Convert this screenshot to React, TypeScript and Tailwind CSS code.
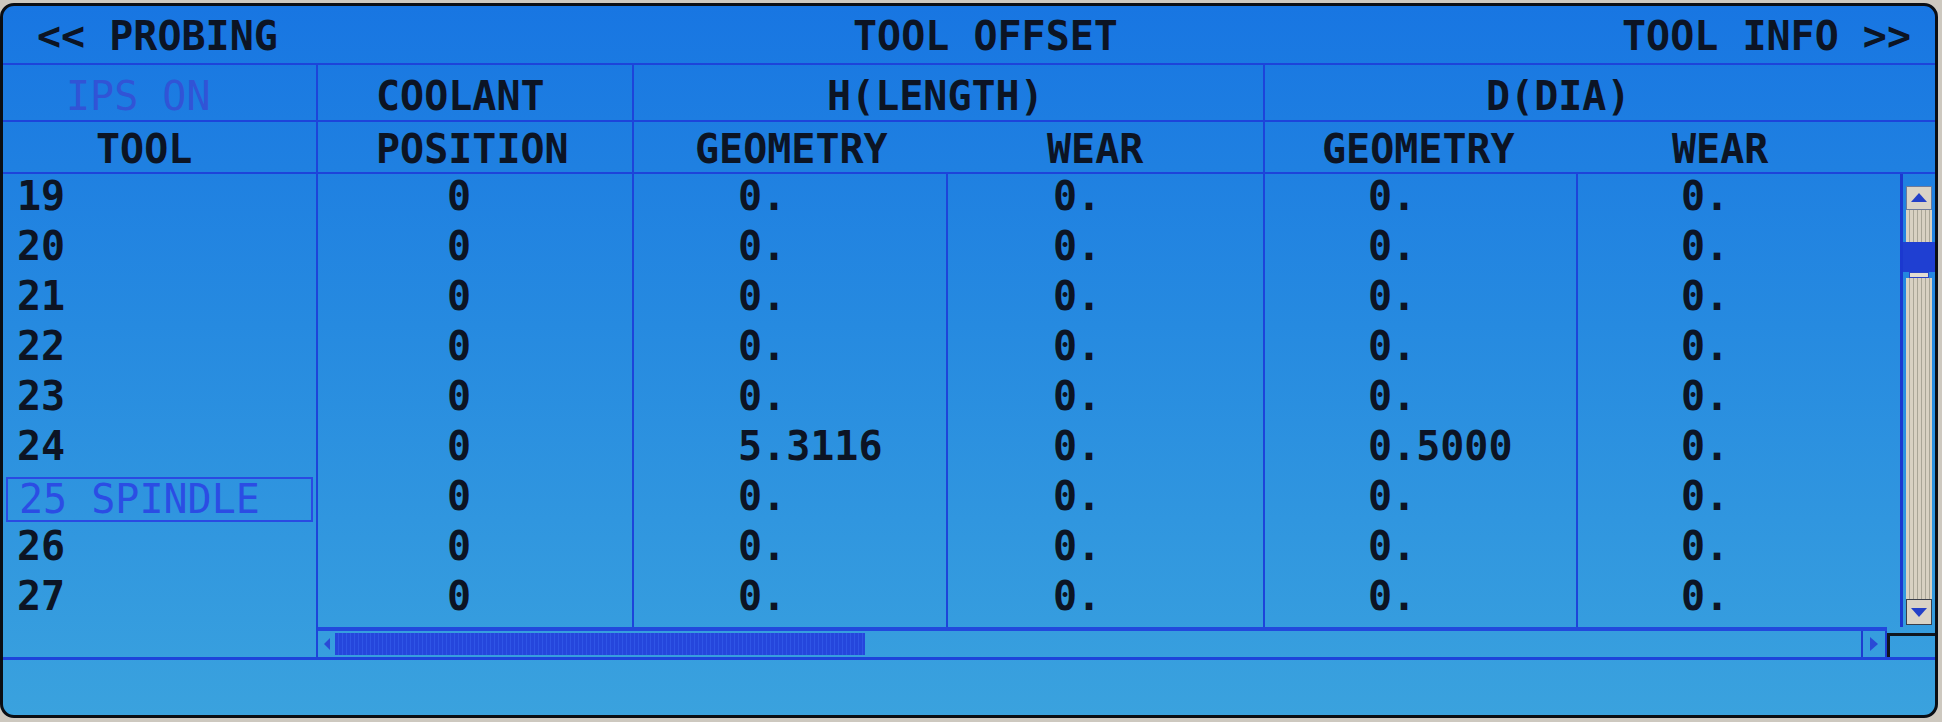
const mono = "font-['DejaVu_Sans_Mono','Liberation_Mono',monospace]"

type Row = { tool: string; note?: string; coolant: string; hg: string; hw: string; dg: string; dw: string }

const rows: Row[] = [
  { tool: '19', coolant: '0', hg: '0.', hw: '0.', dg: '0.', dw: '0.' },
  { tool: '20', coolant: '0', hg: '0.', hw: '0.', dg: '0.', dw: '0.' },
  { tool: '21', coolant: '0', hg: '0.', hw: '0.', dg: '0.', dw: '0.' },
  { tool: '22', coolant: '0', hg: '0.', hw: '0.', dg: '0.', dw: '0.' },
  { tool: '23', coolant: '0', hg: '0.', hw: '0.', dg: '0.', dw: '0.' },
  { tool: '24', coolant: '0', hg: '5.3116', hw: '0.', dg: '0.5000', dw: '0.' },
  { tool: '25', note: 'SPINDLE', coolant: '0', hg: '0.', hw: '0.', dg: '0.', dw: '0.' },
  { tool: '26', coolant: '0', hg: '0.', hw: '0.', dg: '0.', dw: '0.' },
  { tool: '27', coolant: '0', hg: '0.', hw: '0.', dg: '0.', dw: '0.' },
]

function Cell({ pad, children, last }: { pad: string; children?: React.ReactNode; last?: boolean }) {
  return (
    <div className={`flex items-center h-full ${pad} ${last ? '' : 'border-r-2 border-[#1d44da]'}`}>
      {children}
    </div>
  )
}

const track =
  'bg-[repeating-linear-gradient(90deg,#d8d1c2_0px,#d8d1c2_3px,#a9a596_3px,#a9a596_4px)]'

function VScroll() {
  return (
    <div className="w-[35px] flex flex-col pt-[12px] pb-[2px] border-l-[3px] border-[#1b38cf]">
      <div className="h-[24px] mx-[3px] bg-[#d9d3c6] border border-[#6c7a9a] flex items-center justify-center">
        <svg width="20" height="12" viewBox="0 0 20 12">
          <path d="M10 1 L18 10 L2 10 Z" fill="#2340c8" />
        </svg>
      </div>
      <div className={`h-[32px] mx-[3px] ${track}`} />
      <div className="h-[30px] bg-[#1f3fd2]" />
      <div className="h-[6px] mx-[6px] bg-[#e2ddd2] border border-[#2a44c8]" />
      <div className={`flex-1 mx-[3px] ${track}`} />
      <div className="h-[26px] mx-[3px] bg-[#d9d3c6] border border-[#3b3f4a] flex items-center justify-center">
        <svg width="20" height="12" viewBox="0 0 20 12">
          <path d="M2 2 L18 2 L10 11 Z" fill="#2340c8" />
        </svg>
      </div>
    </div>
  )
}

export default function App() {
  return (
    <div className="w-[1942px] h-[722px] bg-[#cdc8bf] pt-[3px] pr-[4px] pb-[4px] overflow-hidden">
      <div
        className={`h-full rounded-[14px] border-[3px] border-[#0a0e14] overflow-hidden flex flex-col bg-[linear-gradient(180deg,#1876e2_0%,#268ae0_45%,#3aa2de_100%)] text-[#0c1424] ${mono}`}
      >
        {/* title row */}
        <div className="h-[59px] shrink-0 flex items-center border-b-2 border-[#1d44da] text-[40px] font-bold leading-none pt-[2px]">
          <div className="w-[850px] pl-[34px]">&lt;&lt; PROBING</div>
          <div>TOOL OFFSET</div>
          <div className="flex-1 flex justify-end pr-[24px]">TOOL INFO &gt;&gt;</div>
        </div>

        {/* group header */}
        <div className="h-[57px] shrink-0 grid grid-cols-[315px_316px_631px_1fr] border-b-2 border-[#1d44da] text-[40px] font-bold leading-none">
          <Cell pad="pl-[63px] pt-[6px]">
            <span className="font-normal text-[#3154d6]">IPS ON</span>
          </Cell>
          <Cell pad="pl-[58px] pt-[6px]">COOLANT</Cell>
          <Cell pad="pl-[193px] pt-[6px]">H(LENGTH)</Cell>
          <Cell pad="pl-[221px] pt-[6px]" last>
            D(DIA)
          </Cell>
        </div>

        {/* column header */}
        <div className="h-[52px] shrink-0 grid grid-cols-[315px_316px_631px_1fr] border-b-2 border-[#1d44da] text-[40px] font-bold leading-none">
          <Cell pad="pl-[93px] pt-[4px]">TOOL</Cell>
          <Cell pad="pl-[58px] pt-[4px]">POSITION</Cell>
          <div className="grid grid-cols-[314px_1fr] border-r-2 border-[#1d44da] pt-[4px]">
            <div className="flex items-center pl-[61px]">GEOMETRY</div>
            <div className="flex items-center pl-[99px]">WEAR</div>
          </div>
          <div className="grid grid-cols-[313px_1fr] pt-[4px]">
            <div className="flex items-center pl-[57px]">GEOMETRY</div>
            <div className="flex items-center pl-[94px]">WEAR</div>
          </div>
        </div>

        {/* data rows + vertical scrollbar */}
        <div className="h-[453px] shrink-0 flex">
          <div className="w-[1862px] grid grid-cols-[315px_316px_314px_317px_313px_1fr] auto-rows-[50px] text-[40px] font-bold leading-none">
            {rows.map((r) => (
              <div key={r.tool} className="contents">
                <div className="h-full border-r-2 border-[#1d44da] flex items-center">
                  {r.note ? (
                    <div className="mx-[3px] mt-[3px] mb-[2px] h-[45px] w-full border-2 border-[#2a4ae2] flex items-center pl-[11px] pb-[2px] font-normal text-[#2b4de4]">
                      {r.tool} {r.note}
                    </div>
                  ) : (
                    <span className="pl-[14px] pb-[6px]">{r.tool}</span>
                  )}
                </div>
                <Cell pad="pl-[129px] pb-[6px]">{r.coolant}</Cell>
                <Cell pad="pl-[104px] pb-[6px]">{r.hg}</Cell>
                <Cell pad="pl-[105px] pb-[6px]">{r.hw}</Cell>
                <Cell pad="pl-[103px] pb-[6px]">{r.dg}</Cell>
                <Cell pad="pl-[103px] pb-[6px]" last>
                  {r.dw}
                </Cell>
              </div>
            ))}
            <div className="h-[3px] border-r-2 border-[#1d44da]" />
            <div className="h-[3px] border-r-2 border-[#1d44da]" />
            <div className="h-[3px] border-r-2 border-[#1d44da]" />
            <div className="h-[3px] border-r-2 border-[#1d44da]" />
            <div className="h-[3px] border-r-2 border-[#1d44da]" />
          </div>
          <div className="flex-1" />
          <VScroll />
        </div>

        {/* horizontal scrollbar */}
        <div className="h-[33px] shrink-0 flex border-b-[3px] border-[#1d44da]">
          <div className="w-[315px] border-r-2 border-[#1d44da]" />
          <div className="w-[1569px] flex border-t-4 border-[#2249dc]">
            <div className="w-[17px] flex items-center justify-center">
              <svg width="8" height="14" viewBox="0 0 8 14">
                <path d="M7 1 L1 7 L7 13 Z" fill="#2a4ad6" />
              </svg>
            </div>
            <div className="w-[530px] my-[2px] bg-[repeating-linear-gradient(90deg,#2546dc_0px,#2546dc_3px,#2f55e6_3px,#2f55e6_4px)]" />
            <div className="flex-1" />
            <div className="w-[26px] border-l-2 border-r-2 border-[#1d3ccf] flex items-center justify-center">
              <svg width="10" height="16" viewBox="0 0 10 16">
                <path d="M1 1 L9 8 L1 15 Z" fill="#2a4ad6" />
              </svg>
            </div>
          </div>
          <div className="flex-1 border-t-[3px] border-l-[3px] border-[#10161f] mt-[6px]" />
        </div>

        <div className="flex-1" />
      </div>
    </div>
  )
}
